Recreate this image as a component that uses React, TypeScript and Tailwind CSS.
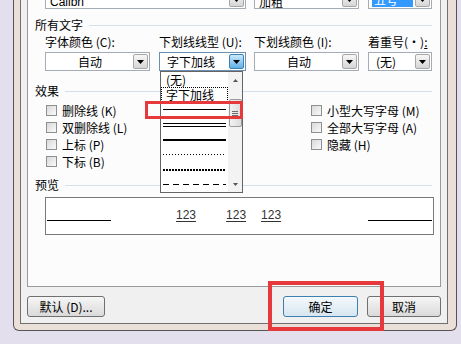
import React from "react"

function Arrow({ color = "#000" }: { color?: string }) {
    return (
        <svg width="7" height="4" viewBox="0 0 7 4">
            <path d="M0 0h7L3.5 4z" fill={color} />
        </svg>
    )
}

function DropButton({ active }: { active?: boolean }) {
    return (
        <div
            className={
                active
                    ? "flex h-[15px] w-[15px] shrink-0 items-center justify-center rounded-[2px] border border-[#3c7fb1] bg-linear-to-b from-[#c9e9fb] to-[#5fb0e6]"
                    : "flex h-[15px] w-[15px] shrink-0 items-center justify-center rounded-[2px] border border-[#a7a7a7] bg-linear-to-b from-[#f7f7f7] to-[#d6d6d6]"
            }
        >
            <Arrow />
        </div>
    )
}

type ComboProps = {
    width: string;
    children?: React.ReactNode;
    center?: boolean;
    active?: boolean;
}

function Combo({ width, children, center, active }: ComboProps) {
    return (
        <div className={`${width} flex h-[19px] items-center border ${active ? "border-[#6d8fb3]" : "border-[#a5acb5]"} bg-white p-[1px]`}>
            <div className={center ? "flex-1 text-center leading-[14px]" : "flex-1 pl-[3px] leading-[14px]"}>{children}</div>
            <DropButton active={active} />
        </div>
    )
}

function Header({ label }: { label: string }) {
    return (
        <div className="flex h-[14px] items-center gap-[6px]">
            <span className="leading-[14px]">{label}</span>
            <div className="h-px flex-1 bg-[#d5dfe5]" />
        </div>
    )
}

function Check({ label }: { label: string }) {
    return (
        <div className="flex h-[17px] items-center gap-[5px]">
            <div className="h-[11px] w-[11px] border border-[#8e8f8f] bg-linear-to-br from-[#d9d9d9] to-[#fafafa]" />
            <span className="leading-[14px]">{label}</span>
        </div>
    )
}

function LineSample({ kind }: { kind: string }) {
    return (
        <svg width="63" height="6" viewBox="0 0 63 6" className="ml-[2px]">
            {kind === "single" && <line x1="0" y1="2.5" x2="63" y2="2.5" stroke="#000" strokeWidth="1" />}
            {kind === "double" && (
                <>
                    <line x1="0" y1="1.5" x2="63" y2="1.5" stroke="#000" strokeWidth="1" />
                    <line x1="0" y1="4.5" x2="63" y2="4.5" stroke="#000" strokeWidth="1" />
                </>
            )}
            {kind === "thick" && <line x1="0" y1="3" x2="63" y2="3" stroke="#000" strokeWidth="2" />}
            {kind === "fine" && <line x1="0" y1="2.5" x2="63" y2="2.5" stroke="#000" strokeWidth="1" strokeDasharray="1 2" />}
            {kind === "dots" && <line x1="0" y1="3" x2="63" y2="3" stroke="#000" strokeWidth="2" strokeDasharray="2 1" />}
            {kind === "dash" && <line x1="0" y1="2.5" x2="63" y2="2.5" stroke="#000" strokeWidth="1" strokeDasharray="6 4" />}
        </svg>
    )
}

function Button({ width, children, focused }: { width: string; children: React.ReactNode; focused?: boolean }) {
    return (
        <div
            className={`${width} flex h-[21px] items-center justify-center rounded-[3px] border ${
                focused ? "border-[#3c7fb1] bg-linear-to-b from-[#f4f9fc] to-[#d7e6f0]" : "border-[#707070] bg-linear-to-b from-[#f6f6f6] to-[#dadada]"
            } leading-[14px]`}
        >
            {children}
        </div>
    )
}

export default function App() {
    return (
        <div className="relative h-[344px] w-[461px] overflow-hidden bg-[#e3dfec] font-['Noto_Sans_CJK_SC',sans-serif] text-[12px] text-black">
            <div className="-mt-[20px] ml-[13px] w-[444px] rounded-b-[6px] border-x border-b border-[#555555] bg-[#eae0d9] pb-[6px] pl-[6px] pr-[8px]">
                <div className="border-x border-b border-[#6f6f6f] bg-[#f0f0f0] px-[6px] pb-[6px]">
                    <div className="h-[307px] border border-[#9a9a9a] bg-[#fcfcfc] pl-[7px] pr-[8px] pt-[9px]">
                        {/* top row, mostly cut off */}
                        <div className="ml-[10px] flex">
                            <div className="flex h-[19px] w-[201px] items-end border border-[#a5acb5] bg-white p-[1px]">
                                <div className="flex-1 pl-[3px] font-['Liberation_Sans',sans-serif] leading-[10px]">Calibri</div>
                                <DropButton />
                            </div>
                            <div className="ml-[8px] flex h-[19px] w-[105px] items-end border border-[#a5acb5] bg-white p-[1px]">
                                <div className="flex-1 pl-[3px] leading-[11px]">加粗</div>
                                <DropButton />
                            </div>
                            <div className="ml-[9px] flex h-[19px] w-[64px] items-end border border-[#a5acb5] bg-white p-[1px]">
                                <div className="flex-1 pl-[2px] pr-[2px]">
                                    <div className="bg-[#3399ff] pl-[2px] leading-[15px] text-white">五号</div>
                                </div>
                                <DropButton />
                            </div>
                        </div>

                        <div className="mt-[9px]">
                            <Header label="所有文字" />
                        </div>

                        <div className="ml-[10px] mt-[3px] flex">
                            <div className="w-[105px]">
                                <div className="h-[14px] leading-[14px]">字体颜色 (C):</div>
                                <div className="mt-[3px]"><Combo width="w-[105px]" center>自动</Combo></div>
                            </div>
                            <div className="ml-[9px] w-[87px]">
                                <div className="h-[14px] whitespace-nowrap leading-[14px]">下划线线型 (U):</div>
                                <div className="mt-[3px]"><Combo width="w-[87px]" active><span className="pl-[3px]">字下加线</span></Combo></div>
                            </div>
                            <div className="ml-[8px] w-[105px]">
                                <div className="h-[14px] leading-[14px]">下划线颜色 (I):</div>
                                <div className="mt-[3px]"><Combo width="w-[105px]" center>自动</Combo></div>
                            </div>
                            <div className="ml-[9px] w-[64px]">
                                <div className="h-[14px] whitespace-nowrap leading-[14px]">着重号(<span>·</span>)<span className="underline">:</span></div>
                                <div className="mt-[3px]"><Combo width="w-[64px]"><span className="pl-[3px]">(无)</span></Combo></div>
                            </div>
                        </div>

                        <div className="mt-[13px]">
                            <Header label="效果" />
                        </div>

                        <div className="mt-[4px] flex">
                            <div className="ml-[11px] w-[265px]">
                                <Check label="删除线 (K)" />
                                <Check label="双删除线 (L)" />
                                <Check label="上标 (P)" />
                                <Check label="下标 (B)" />
                            </div>
                            <div>
                                <Check label="小型大写字母 (M)" />
                                <Check label="全部大写字母 (A)" />
                                <Check label="隐藏 (H)" />
                            </div>
                        </div>

                        <div className="mt-[8px]">
                            <Header label="预览" />
                        </div>

                        <div className="ml-[10px] mt-[5px] flex h-[38px] w-[389px] items-start border border-[#7a7a7a] bg-white font-['Liberation_Sans',sans-serif] text-[#333333]">
                            <div className="ml-[1px] mt-[22px] h-px w-[64px] bg-black" />
                            <span className="ml-[65px] mt-[10px] leading-[14px] underline underline-offset-[2px]">123</span>
                            <span className="ml-[30px] mt-[10px] leading-[14px] underline underline-offset-[2px]">123</span>
                            <span className="ml-[15px] mt-[10px] leading-[14px] underline underline-offset-[2px]">123</span>
                            <div className="ml-auto mr-[1px] mt-[22px] h-px w-[64px] bg-black" />
                        </div>
                    </div>

                    <div className="mt-[9px] flex justify-between">
                        <Button width="w-[78px]">默认 (D)...</Button>
                        <div className="flex gap-[9px]">
                            <Button width="w-[75px]" focused>确定</Button>
                            <Button width="w-[74px]">取消</Button>
                        </div>
                    </div>
                </div>
            </div>

            {/* open underline style list */}
            <div className="absolute left-[160px] top-[71px] flex h-[122px] w-[83px] border border-[#646464] bg-white">
                <div className="w-[67px]">
                    <div className="flex h-[15px] items-center overflow-hidden pl-[5px] leading-[13px]">(无)</div>
                    <div className="flex h-[15px] items-center overflow-hidden border border-dotted border-black pl-[4px] leading-[12px]">字下加线</div>
                    <div className="flex h-[15px] items-center"><LineSample kind="single" /></div>
                    <div className="flex h-[15px] items-center"><LineSample kind="double" /></div>
                    <div className="flex h-[15px] items-center"><LineSample kind="thick" /></div>
                    <div className="flex h-[15px] items-center"><LineSample kind="fine" /></div>
                    <div className="flex h-[15px] items-center"><LineSample kind="dots" /></div>
                    <div className="flex h-[15px] items-center"><LineSample kind="dash" /></div>
                </div>
                <div className="flex w-[14px] flex-col items-center bg-[#f3f3f3]">
                    <div className="flex h-[16px] items-center">
                        <svg width="5" height="3" viewBox="0 0 5 3"><path d="M0 3h5L2.5 0z" fill="#555" /></svg>
                    </div>
                    <div className="mt-[11px] flex h-[28px] w-[13px] flex-col items-center justify-center gap-[1px] rounded-[2px] border border-[#9c9c9c] bg-linear-to-r from-[#f2f2f2] to-[#dcdcdc]">
                        <div className="h-px w-[6px] bg-[#707070]" />
                        <div className="h-px w-[6px] bg-[#707070]" />
                        <div className="h-px w-[6px] bg-[#707070]" />
                    </div>
                    <div className="mt-auto flex h-[16px] items-center">
                        <svg width="5" height="3" viewBox="0 0 5 3"><path d="M0 0h5L2.5 3z" fill="#555" /></svg>
                    </div>
                </div>
            </div>

            {/* red annotation frames */}
            <div className="absolute left-[145px] top-[101px] h-[18px] w-[98px] border-[3px] border-[#e5393b]" />
            <div className="absolute left-[268px] top-[281px] h-[50px] w-[116px] border-4 border-[#e5393b]" />
        </div>
    )
}
